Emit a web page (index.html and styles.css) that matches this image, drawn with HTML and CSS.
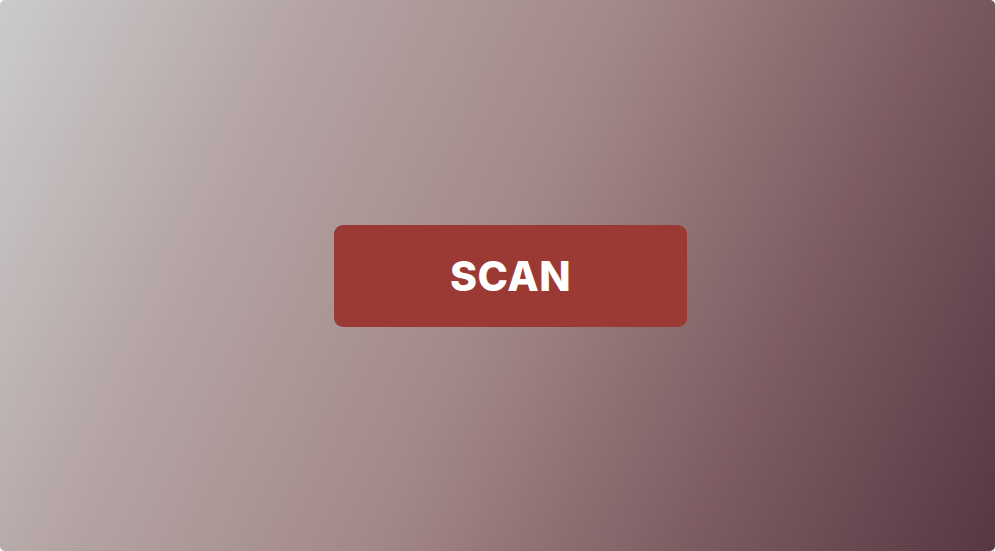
FILE: index.html
```html
<!DOCTYPE html>
<html lang="en">
<head>
<meta charset="utf-8">
<title>Scan</title>
<link rel="stylesheet" href="styles.css">
</head>
<body>
<main class="stage">
  <button class="scan-btn" type="button">SCAN</button>
</main>
</body>
</html>
```
FILE: styles.css
```css
html, body {
  margin: 0;
  padding: 0;
  height: 100%;
  background: #ffffff;
}
.stage {
  height: 100%;
  box-sizing: border-box;
  padding-left: 26px;
  border-radius: 5px;
  background: linear-gradient(115deg, #cbcbcb 0%, #b5a4a4 25%, #a38889 50%, #7d5d62 75%, #553843 100%);
  display: flex;
  align-items: center;
  justify-content: center;
}
.scan-btn {
  width: 353px;
  height: 102px;
  border: none;
  border-radius: 9px;
  background: #9b3a35;
  color: #ffffff;
  font-family: Inter, "Noto Sans", sans-serif;
  font-weight: 800;
  font-size: 41px;
  letter-spacing: 0.5px;
  cursor: pointer;
}
```
